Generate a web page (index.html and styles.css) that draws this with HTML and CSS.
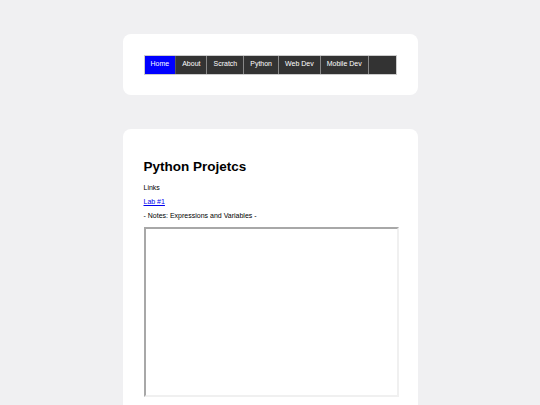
FILE: index.html
```html
<!DOCTYPE html>
<html lang="en">

<head>
    <meta charset="UTF-8">
    <meta name="viewport" content="width=device-width, initial-scale=1.0">
    <title>Python Projects</title>
    <link rel="stylesheet" href="styles.css">
</head>
<body>
    <!-- Top navigation card -->
    <div class="card nav-card">
        <ul class="topnav">
            <li class="active"><a href="#">Home</a></li>
            <li><a href="#">About</a></li>
            <li><a href="#">Scratch</a></li>
            <li><a href="#">Python</a></li>
            <li><a href="#">Web Dev</a></li>
            <li><a href="#">Mobile Dev</a></li>
        </ul>
    </div>

    <!-- Main content card -->
    <div class="card content-card">
        <h1>Python Projetcs</h1>
        <p>Links</p>
        <p><a href="#" class="lab-link">Lab #1</a></p>
        <p>- Notes: Expressions and Variables -</p>
        <iframe class="notes-frame" title="Notes"></iframe>
    </div>
</body>
</html>
```

FILE: styles.css
```css
body {
    font-family: 'Liberation Sans', Arial, sans-serif;
    margin: 0;
    padding: 34px 0 0 0;
    background-color: #f0f0f2;
    color: #000;
}

.card {
    width: 253px;
    margin: 0 auto;
    background-color: #fff;
    border-radius: 8px;
    padding: 21px 21px 20px 21px;
}

.nav-card {
    margin-bottom: 34px;
}

/* The navigation bar */
.topnav {
    list-style: none;
    margin: 0;
    padding: 0;
    display: flex;
    background-color: #333;
    border: 1px solid #ccc;
}

.topnav li {
    border-right: 1px solid #888;
}

.topnav a {
    display: block;
    padding: 4px 6px 6px 6px;
    font-size: 7px;
    line-height: 8px;
    color: #fff;
    text-decoration: none;
}

.topnav li.active {
    background-color: #0000ff;
    border-right-color: #555;
}

.content-card {
    padding-bottom: 40px;
}

h1 {
    font-size: 13.5px;
    line-height: 16px;
    margin: 9px 0;
}

p {
    font-size: 7px;
    line-height: 8px;
    margin: 6px 0;
}

.lab-link {
    color: #0000ee;
}

.notes-frame {
    display: block;
    width: 251px;
    height: 166px;
    margin-top: 7px;
    border-style: solid;
    border-width: 2px;
    border-color: #a8a8a8 #f0f0f0 #f0f0f0 #a8a8a8;
}
```
